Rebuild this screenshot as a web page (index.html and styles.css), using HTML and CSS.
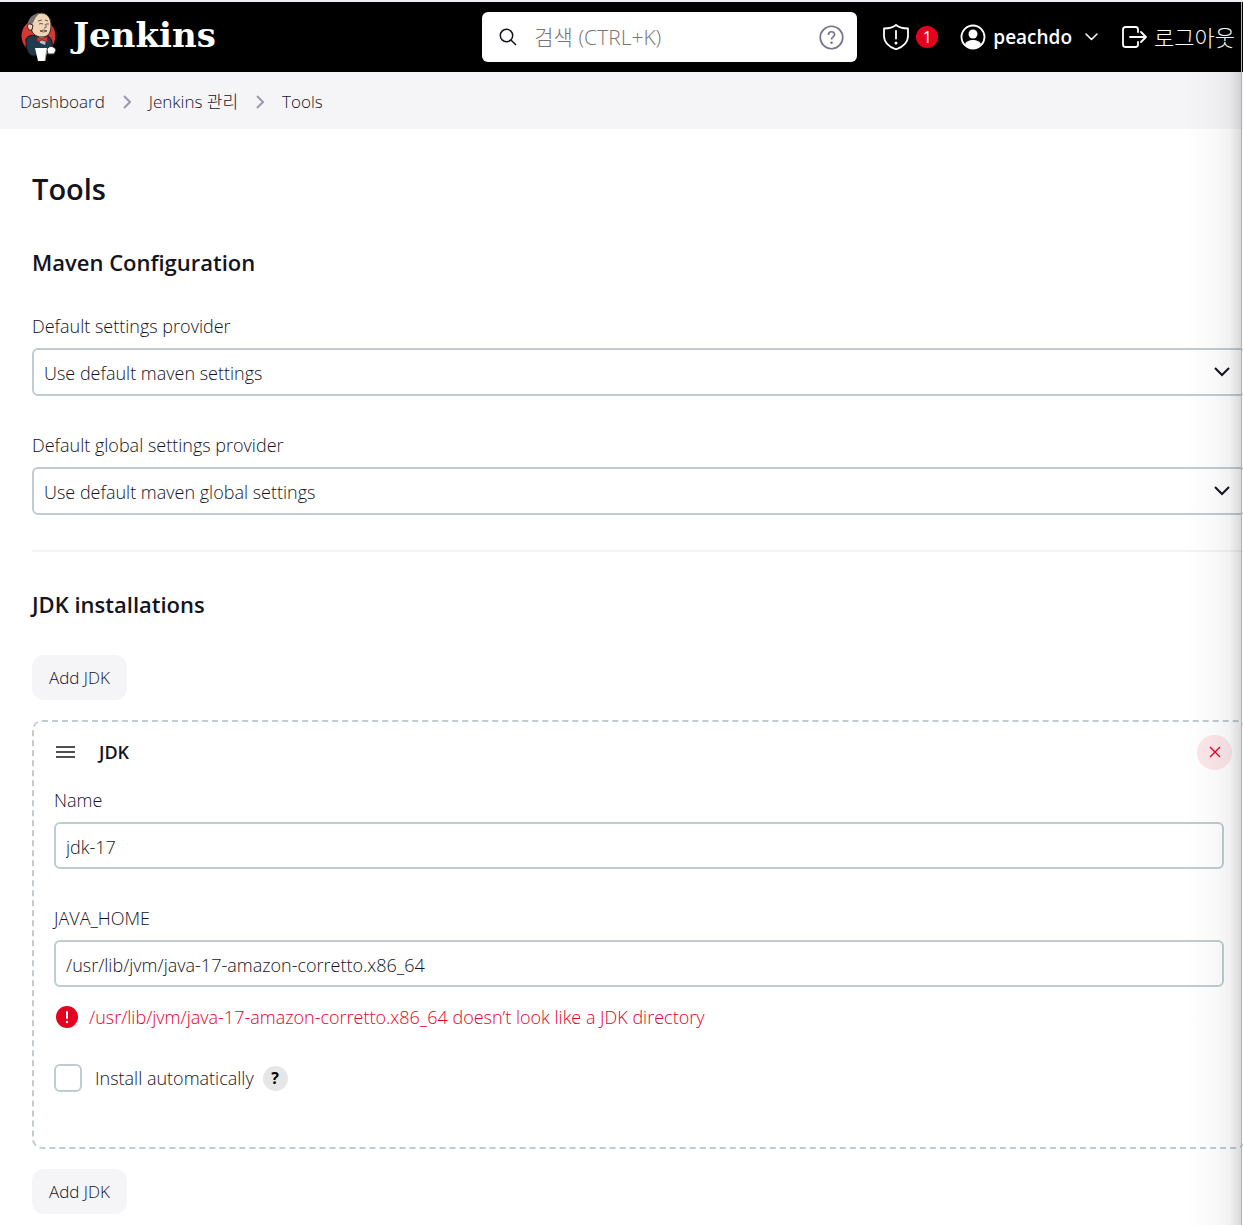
FILE: index.html
```html
<!DOCTYPE html>
<html lang="ko">
<head>
<meta charset="utf-8">
<meta name="viewport" content="width=device-width, initial-scale=1">
<title>Tools - Jenkins</title>
<link rel="stylesheet" href="styles.css">
</head>
<body>
<div class="page">
  <header class="header">
    <a class="brand" href="#">
      <svg class="brand-icon" viewBox="0 0 38 50" aria-hidden="true">
        <circle cx="18.500" cy="24" r="17" fill="#d33833"/>
        <path d="M6 27 C8 23 13 23 16 24 L28 24 C32 26 33 33 32 37 L30 42 L13 44 C7 43 6 35 6 27Z" fill="#1f3b4d" stroke="#111" stroke-width="1"/>
        <path d="M18 24 L27 25 L25 33 L20 31Z" fill="#a9c0cc"/>
        <path d="M10 12 C11 4 16 1 22 1 C29 2 31 8 31 13 C31 20 29 25 22 25 C15 25 11 21 10 12Z" fill="#f0d6b7" stroke="#332b25" stroke-width="1"/>
        <path d="M20 1 C11 2 7 8 8 15 L11 18 L12 12 C14 11 13 7 20 1Z" fill="#77706c"/>
        <path d="M10 12 C7 11 7 16 9 18 L12 18 L13 13Z" fill="#f0d6b7" stroke="#332b25" stroke-width="1"/>
        <path d="M18 9 l4 -1 M25 8 l3 1 M19 12 q2 -1 4 0 M26 12 h3 M25 12 q3 4 -1 4 M20 19 q4 -2 7 0 q-4 2 -7 0" fill="none" stroke="#49372b" stroke-width=".8"/>
        <path d="M17 25 L22 27 L27 24 L28 30 L22 28 L17 30Z" fill="#d33833" stroke="#811" stroke-width=".8"/>
        <path d="M27 37 C30 33 34 34 36 38 L34 42 L28 42Z" fill="#fff" stroke="#333" stroke-width="1"/>
        <path d="M15 36 H27 L25 49 H18Z" fill="#fff"/>
        <path d="M27 37 L25 49" stroke="#999" stroke-width="1"/>
      </svg>
      <span class="brand-name">Jenkins</span>
    </a>
    <form class="search" role="search">
      <svg class="search-icon" viewBox="0 0 18 18" fill="none" stroke="#14141f" stroke-width="1.500" aria-hidden="true"><circle cx="7.500" cy="7.500" r="6.200"/><path d="M12 12 L17 17"/></svg>
      <input class="search-input" type="search" placeholder="검색 (CTRL+K)" aria-label="검색">
      <a class="search-help" href="#" aria-label="Search help">
        <svg viewBox="0 0 24 24" fill="none" stroke="#73738c" stroke-width="1.600" aria-hidden="true"><circle cx="12" cy="12" r="10.800"/><path d="M9 9.500 C9 5.500 15 5.500 15 9.200 C15 11.500 12 11.500 12 14"/><circle cx="12" cy="17" r="1.200" fill="#73738c" stroke="none"/></svg>
      </a>
    </form>
    <nav class="actions" aria-label="User">
      <a class="alerts" href="#" aria-label="Security warnings">
        <svg class="icon" viewBox="0 0 26 26" stroke-width="1.800" aria-hidden="true"><path d="M13 1 C10 3.500 5 4.500 1 4.500 V12 C1 18 6 23 13 25.300 C20 23 25 18 25 12 V4.500 C21 4.500 16 3.500 13 1Z M13 7 V14.500"/><circle class="dot" cx="13" cy="19" r="1.500"/></svg>
        <span class="badge">1</span>
      </a>
      <a class="user" href="#">
        <svg class="icon" viewBox="0 0 26 26" stroke-width="1.800" aria-hidden="true"><circle cx="13" cy="13" r="11.500"/><circle class="dot" cx="13" cy="10" r="4.500"/><path class="dot" d="M5 20.500 C6 14.500 20 14.500 21 20.500 C17 25.500 9 25.500 5 20.500Z"/></svg>
        <span>peachdo</span>
      </a>
      <button class="user-menu" type="button" aria-label="User menu"><svg viewBox="0 0 13 8" stroke-width="1.500" aria-hidden="true"><path d="M1 1 L6.500 6.500 L12 1"/></svg></button>
      <a class="logout" href="#">
        <svg class="icon" viewBox="0 0 26 26" stroke-width="1.800" aria-hidden="true"><path d="M17 8 V5.500 Q17 3 14.500 3 H4.500 Q2 3 2 5.500 V20.500 Q2 23 4.500 23 H14.500 Q17 23 17 20.500 V18 M9 13 H25 M20 8 L25 13 L20 18"/></svg>
        <span>로그아웃</span>
      </a>
    </nav>
  </header>

  <nav class="breadcrumbs" aria-label="Breadcrumb">
    <a href="#">Dashboard</a>
    <svg viewBox="0 0 8 14" aria-hidden="true"><path d="M1 1 L7 7 L1 13"/></svg>
    <a href="#">Jenkins 관리</a>
    <svg viewBox="0 0 8 14" aria-hidden="true"><path d="M1 1 L7 7 L1 13"/></svg>
    <a href="#">Tools</a>
  </nav>

  <main class="main">
    <h1>Tools</h1>
    <section>
      <h2>Maven Configuration</h2>
      <div class="field">
        <label for="settings">Default settings provider</label>
        <div class="select">
          <select id="settings"><option>Use default maven settings</option></select>
          <svg viewBox="0 0 16 10" aria-hidden="true"><path d="M1 1 L8 8 L15 1"/></svg>
        </div>
      </div>
      <div class="field">
        <label for="global-settings">Default global settings provider</label>
        <div class="select">
          <select id="global-settings"><option>Use default maven global settings</option></select>
          <svg viewBox="0 0 16 10" aria-hidden="true"><path d="M1 1 L8 8 L15 1"/></svg>
        </div>
      </div>
    </section>
    <section class="divided">
      <h2>JDK installations</h2>
      <button class="add" type="button">Add JDK</button>
      <div class="tool">
        <div class="tool-header">
          <svg class="handle" viewBox="0 0 19 12" stroke-width="1.700" aria-hidden="true"><path d="M0 1 H19 M0 6 H19 M0 11 H19"/></svg>
          <h3>JDK</h3>
          <button class="remove" type="button" aria-label="Delete JDK"><svg viewBox="0 0 12 12" stroke-width="1.400" aria-hidden="true"><path d="M1 1 L11 11 M11 1 L1 11"/></svg></button>
        </div>
        <div class="field">
          <label for="name">Name</label>
          <input class="text" id="name" type="text" value="jdk-17">
        </div>
        <div class="field">
          <label for="home">JAVA_HOME</label>
          <input class="text" id="home" type="text" value="/usr/lib/jvm/java-17-amazon-corretto.x86_64">
        </div>
        <p class="error">
          <svg viewBox="0 0 22 22" aria-hidden="true"><circle cx="11" cy="11" r="11" fill="#e6001f"/><path d="M11 6 V12" stroke="#fff" stroke-width="2" stroke-linecap="round"/><circle cx="11" cy="16" r="1.200" fill="#fff"/></svg>
          <span>/usr/lib/jvm/java-17-amazon-corretto.x86_64 doesn’t look like a JDK directory</span>
        </p>
        <div class="check">
          <input id="auto" type="checkbox">
          <label for="auto">Install automatically</label>
          <button class="help" type="button" aria-label="Help: Install automatically">?</button>
        </div>
      </div>
      <button class="add" type="button">Add JDK</button>
    </section>
  </main>
  <div class="edge-shadow"></div>
</div>
</body>
</html>
```
FILE: styles.css
```css
:root {
  --text: #14141f;
  --line: #c1cbd0;
  --red: #e6001f;
  --soft: #f5f5f8;
}

* { box-sizing: border-box; }

body {
  margin: 0;
  background: #fff;
  color: var(--text);
  font: 300 18px/24px "Open Sans", "Noto Sans CJK KR", sans-serif;
}

a { color: inherit; text-decoration: none; }
button, input, select { font: inherit; color: inherit; }
button { padding: 0; border: 0; cursor: pointer; }
svg { display: block; flex: none; }

.page {
  position: relative;
  min-height: 100vh;
  overflow: hidden;
  border-top: 2px solid #ededf3;
}

.edge-shadow {
  position: absolute;
  inset: 0 1px 0 auto;
  width: 60px;
  border-right: 1px solid #b0b0b0;
  background: linear-gradient(to right, rgba(0, 0, 0, 0) 0%, rgba(0, 0, 0, .02) 50%, rgba(0, 0, 0, .05) 80%, rgba(0, 0, 0, .15) 100%);
  pointer-events: none;
}

/* Header */
.header {
  display: flex;
  align-items: center;
  height: 70px;
  padding: 0 8px 0 20px;
  background: #000;
  color: #fff;
}

.brand { display: flex; align-items: center; gap: 15px; margin-right: auto; }
.brand-icon { width: 38px; height: 50px; }
.brand-name { padding-bottom: 4px; font: 700 34px/40px "DejaVu Serif", serif; }

.search {
  display: flex;
  align-items: center;
  width: 375px;
  height: 50px;
  padding: 0 13px 0 17px;
  border-radius: 6px;
  background: #fff;
}
.search-icon { width: 18px; height: 18px; }
.search-input {
  flex: 1;
  min-width: 0;
  padding: 0 17px;
  border: 0;
  outline: 0;
  background: none;
  font-size: 21px;
}
.search-input::placeholder { color: #757575; opacity: 1; }
.search-help svg { width: 25px; height: 25px; }

.actions { display: flex; align-items: center; margin-left: 26px; font-size: 19px; }
.actions a { display: flex; align-items: center; }
.actions svg { fill: none; stroke: #fff; stroke-linecap: round; stroke-linejoin: round; }
.actions .icon { width: 26px; height: 26px; }
.actions .dot { fill: #fff; stroke: none; }
.alerts { gap: 7px; }
.badge {
  width: 22px;
  border-radius: 11px;
  background: var(--red);
  font-size: 16px;
  font-weight: 400;
  line-height: 22px;
  text-align: center;
}
.user { gap: 7px; margin-left: 22px; font-weight: 600; }
.user-menu { margin: 0 23px 0 13px; background: none; }
.user-menu svg { width: 13px; height: 8px; }
.logout { gap: 7px; font-size: 22px; }

/* Breadcrumbs */
.breadcrumbs {
  display: flex;
  align-items: center;
  gap: 18px;
  height: 57px;
  padding: 2px 20px 0;
  background: var(--soft);
  font-size: 17px;
}
.breadcrumbs svg { width: 8px; height: 14px; fill: none; stroke: #9a9aaf; stroke-width: 2; }

/* Content */
.main { margin-right: -3px; padding: 40px 0 12px 32px; }
h1, h2, h3, p { margin: 0; }
h1, h2, h3 { font-weight: 600; }
h1 { margin-bottom: 37px; font-size: 29px; line-height: 40px; }
h2 { margin-bottom: 36px; font-size: 22px; line-height: 32px; }
h3 { font-size: 18px; }

.field { display: flex; flex-direction: column; gap: 10px; margin-bottom: 37px; }
.field:last-child { margin-bottom: 35px; }
.field label { align-self: flex-start; }

.text, select {
  width: 100%;
  height: 47px;
  padding: 2px 10px 0;
  border: 2px solid var(--line);
  border-radius: 6px;
  background: #fff;
}
select { height: 48px; appearance: none; }
.select { display: grid; align-items: center; }
.select > * { grid-area: 1 / 1; }
.select svg {
  justify-self: end;
  width: 16px;
  height: 10px;
  margin-right: 16px;
  fill: none;
  stroke: var(--text);
  stroke-width: 2;
  pointer-events: none;
}

.divided { padding-top: 36px; border-top: 2px solid #f3f3f7; }
.divided h2 { margin-bottom: 35px; }
.add {
  display: block;
  height: 45px;
  padding: 0 17px;
  border-radius: 12px;
  background: var(--soft);
  font-size: 17px;
}

.tool {
  margin: 20px 0;
  padding: 12px 20px 55px;
  border: 2px dashed var(--line);
  border-radius: 10px;
}
.tool-header { display: flex; align-items: center; height: 36px; margin: 0 -8px 18px 2px; }
.handle { width: 19px; height: 12px; margin-right: 24px; stroke: var(--text); }
.remove {
  display: grid;
  place-items: center;
  width: 35px;
  height: 35px;
  margin-left: auto;
  border-radius: 50%;
  background: #fce6e9;
}
.remove svg { width: 12px; height: 12px; stroke: var(--red); }

.error { display: flex; align-items: center; gap: 11px; margin: -19px 0 35px 2px; color: var(--red); }
.error svg { width: 22px; height: 22px; }

.check { display: flex; align-items: center; height: 28px; }
.check input {
  width: 28px;
  height: 28px;
  margin: 0 13px 0 0;
  appearance: none;
  border: 2px solid var(--line);
  border-radius: 6px;
}
.help {
  width: 25px;
  height: 25px;
  margin-left: 9px;
  border-radius: 50%;
  background: #e6e6e6;
  color: #000;
  font-size: 16px;
  font-weight: 700;
}
```
